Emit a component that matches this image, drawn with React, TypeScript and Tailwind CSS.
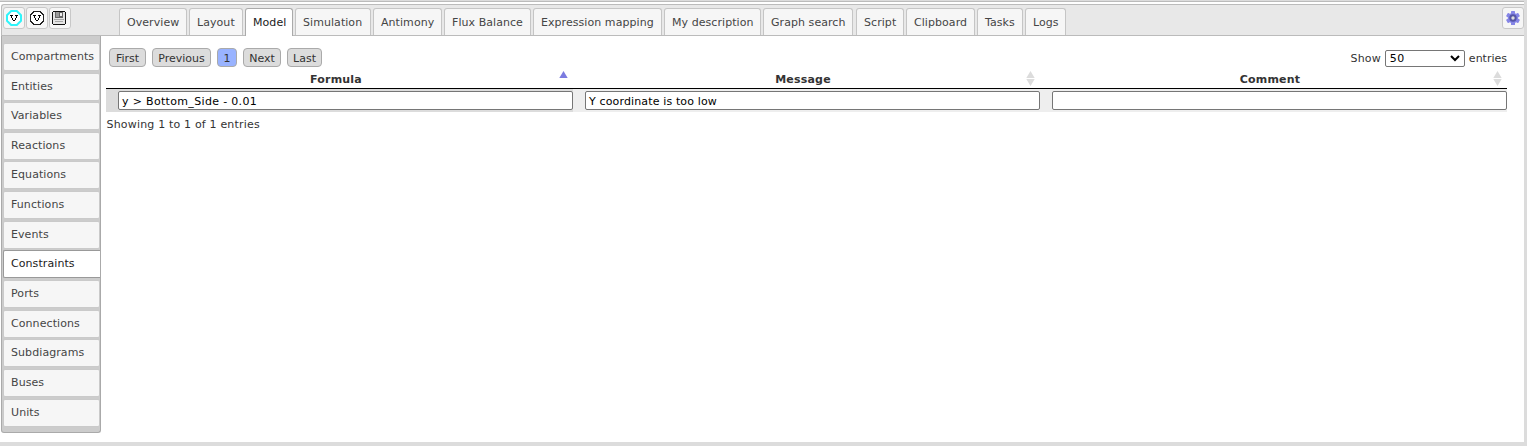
import React from "react";

const tabs: [string, string][] = [
  ["Overview", "w-[68px]"],
  ["Layout", "w-[54px]"],
  ["Model", "w-[48px]"],
  ["Simulation", "w-[76px]"],
  ["Antimony", "w-[69px]"],
  ["Flux Balance", "w-[87px]"],
  ["Expression mapping", "w-[129px]"],
  ["My description", "w-[97px]"],
  ["Graph search", "w-[90px] mr-px"],
  ["Script", "w-[48px]"],
  ["Clipboard", "w-[69px]"],
  ["Tasks", "w-[46px]"],
  ["Logs", "w-[41px]"],
];

const sections = [
  "Compartments", "Entities", "Variables", "Reactions", "Equations", "Functions", "Events",
  "Constraints", "Ports", "Connections", "Subdiagrams", "Buses", "Units",
];

const pages: [string, string][] = [
  ["First", "w-[37px]"],
  ["Previous", "w-[59px]"],
  ["1", "w-[20px]"],
  ["Next", "w-[38px]"],
  ["Last", "w-[35px]"],
];

const columns: [string, string, string][] = [
  ["Formula", "y > Bottom_Side - 0.01", "tracking-[0.33px]"],
  ["Message", "Y coordinate is too low", "tracking-[0.14px]"],
  ["Comment", "", ""],
];

function ToolButton({ children }: { children: React.ReactNode }) {
  return (
    <button className="flex h-[22px] w-[22px] items-center justify-center rounded-[3px] border border-[#c8c8c8] bg-[#f6f6f6]">
      {children}
    </button>
  );
}

function VIcon({ ring, bold }: { ring: string; bold?: boolean }) {
  return (
    <svg width="16" height="16" viewBox="0 0 16 16">
      {bold ? (
        <path d="M5.2 1H10.8L15 5.2V10.8L10.8 15H5.2L1 10.8V5.2Z" fill="#fff" stroke={ring} strokeWidth="2" />
      ) : (
        <path d="M5 1.5H11L14.5 5V11L11 14.5H5L1.5 11V5Z" fill="#fff" stroke={ring} strokeWidth="1" shapeRendering="crispEdges" />
      )}
      <path
        d="M4 5h3v1h-3zM9 5h3v1h-3zM5 6h1v2h-1zM10 6h1v2h-1zM6 8h1v1h-1zM9 8h1v1h-1zM6 9h1v1h-1zM9 9h1v1h-1zM7 10h2v1h-2z"
        fill="#000"
        shapeRendering="crispEdges"
      />
    </svg>
  );
}

function SaveIcon() {
  return (
    <svg width="14" height="14" viewBox="0 0 14 14" shapeRendering="crispEdges" className="-translate-x-px">
      <path d="M1 0H13V1H14V13H13V14H1V13H0V1H1Z" fill="#111" />
      <path d="M1 1H13V13H1Z" fill="#e4e4e4" />
      <path d="M3 1H11V7H3Z" fill="#666" />
      <path d="M4 1H7V6H4Z" fill="#999" />
      <path d="M8 2H10V5H8Z" fill="#eee" />
      <path d="M2 8H12V9H2ZM3 10H11V11H3Z" fill="#a5a5a5" />
    </svg>
  );
}

function GearIcon() {
  return (
    <svg width="14" height="14" viewBox="0 0 14 14">
      <g fill="#8585e6">
        <circle cx="7" cy="7" r="5.2" />
        <rect x="5" y="0" width="4" height="14" rx=".6" />
        <rect x="5" y="0" width="4" height="14" rx=".6" transform="rotate(60 7 7)" />
        <rect x="5" y="0" width="4" height="14" rx=".6" transform="rotate(120 7 7)" />
      </g>
      <circle cx="7" cy="7" r="2.7" fill="#ddd" stroke="#5555a5" strokeWidth="2" />
    </svg>
  );
}

function SortIcon({ active }: { active: boolean }) {
  return (
    <svg width="9" height="16" viewBox="0 0 9 16" className="absolute -top-[2px] right-[5px]">
      <path d="M4.5 0L8.7 7H.3Z" fill={active ? "#7b7be0" : "#dcdcdc"} />
      {!active && <path d="M.3 8H8.7L4.5 15Z" fill="#dcdcdc" />}
    </svg>
  );
}

export default function App() {
  return (
    <div className="flex h-[446px] w-[1527px] flex-col overflow-hidden border-r-[3px] border-b-4 border-[#dcdcdc] bg-white font-['DejaVu_Sans',Verdana,sans-serif] text-[11px] leading-[14px] text-[#333]">
      <div className="h-[2px] shrink-0 border-b border-[#bbb] bg-[#dcdcdc]" />
      <div className="h-[2px] shrink-0 bg-white" />
      <header className="ml-px flex h-8 shrink-0 items-start rounded-tl-[3px] border-y border-l border-[#bbb] bg-[#e8e8e8]">
        <div className="flex w-[117px] gap-px pt-[2px] pl-px">
          <ToolButton><VIcon ring="#2ff4fa" bold /></ToolButton>
          <ToolButton><VIcon ring="#222" /></ToolButton>
          <ToolButton><SaveIcon /></ToolButton>
        </div>
        <nav className="flex gap-[2px] pt-[3px]">
          {tabs.map(([label, width]) => (
            <div
              key={label}
              className={`${width} rounded-t-[3px] border border-b-0 pt-[7px] pl-[7px] tracking-[0.06px] whitespace-nowrap ${
                label === "Model" ? "h-7 border-[#aaa] bg-white text-[#212121]" : "h-[27px] border-[#c5c5c5] bg-[#f6f6f6] text-[#454545]"
              }`}
            >
              {label}
            </div>
          ))}
        </nav>
        <div className="ml-auto pt-[2px]">
          <ToolButton><GearIcon /></ToolButton>
        </div>
      </header>

      <div className="flex min-h-0 flex-1">
        <aside className="ml-px flex h-[397px] w-[100px] shrink-0 flex-col gap-[1.65px] rounded-b-[3px] border border-t-0 border-[#aaa] bg-[#ccc] pt-[6.9px] pl-px">
          {sections.map((label) => (
            <div
              key={label}
              className={`flex h-7 shrink-0 items-center rounded-[2px] border pl-[7px] tracking-[0.08px] ${
                label === "Constraints"
                  ? "rounded-r-none border-r-0 border-[#999] bg-white text-[#212121]"
                  : "border-[#cacaca] bg-[#f6f6f6] text-[#454545]"
              }`}
            >
              {label}
            </div>
          ))}
        </aside>

        <main className="ml-[5px] w-[1401px] pt-3">
          <div className="flex h-[25px] justify-between pl-[3px]">
            <div className="flex gap-[6px]">
              {pages.map(([label, width]) => (
                <button
                  key={label}
                  className={`${width} h-[19px] rounded-[4px] border border-[#aaa] pt-px leading-[17px] ${label === "1" ? "bg-[#99b3ff]" : "bg-[#dcdcdc]"}`}
                >
                  {label}
                </button>
              ))}
            </div>
            <div className="mt-[2px] flex h-[17px] items-center gap-1">
              <span className="pt-px tracking-[0.15px]">Show</span>
              <div className="flex h-[17px] w-20 items-center justify-between rounded-[2px] border border-[#767676] bg-white pr-1 pl-1 text-black">
                <span className="pt-px tracking-[0.3px]">50</span>
                <svg width="10" height="7" viewBox="0 0 10 7"><path d="M1 1L5 5L9 1" fill="none" stroke="#000" strokeWidth="2" /></svg>
              </div>
              <span className="pt-px">entries</span>
            </div>
          </div>
          <div className="flex h-4 border-b border-black">
            {columns.map(([title], i) => (
              <div key={title} className="relative w-[467px] text-center font-bold tracking-[0.2px]">
                <span className="inline-block -translate-x-[3.5px]">{title}</span>
                <SortIcon active={i === 0} />
              </div>
            ))}
          </div>
          <div className="flex h-[23px]">
            {columns.map(([title, value, tracking], i) => (
              <div key={title} className={`w-[467px] pt-[2px] pl-3 ${i === 0 ? "bg-[#dcdcdc]" : "bg-[#eee]"}`}>
                <div className={`${tracking} h-[19px] rounded-[2px] border border-[#767676] bg-white pt-px pl-[3px] leading-[17px] text-black`}>{value}</div>
              </div>
            ))}
          </div>
          <p className="mt-[6px] pl-[0.5px] tracking-[0.18px]">Showing 1 to 1 of 1 entries</p>
        </main>
      </div>
    </div>
  );
}
